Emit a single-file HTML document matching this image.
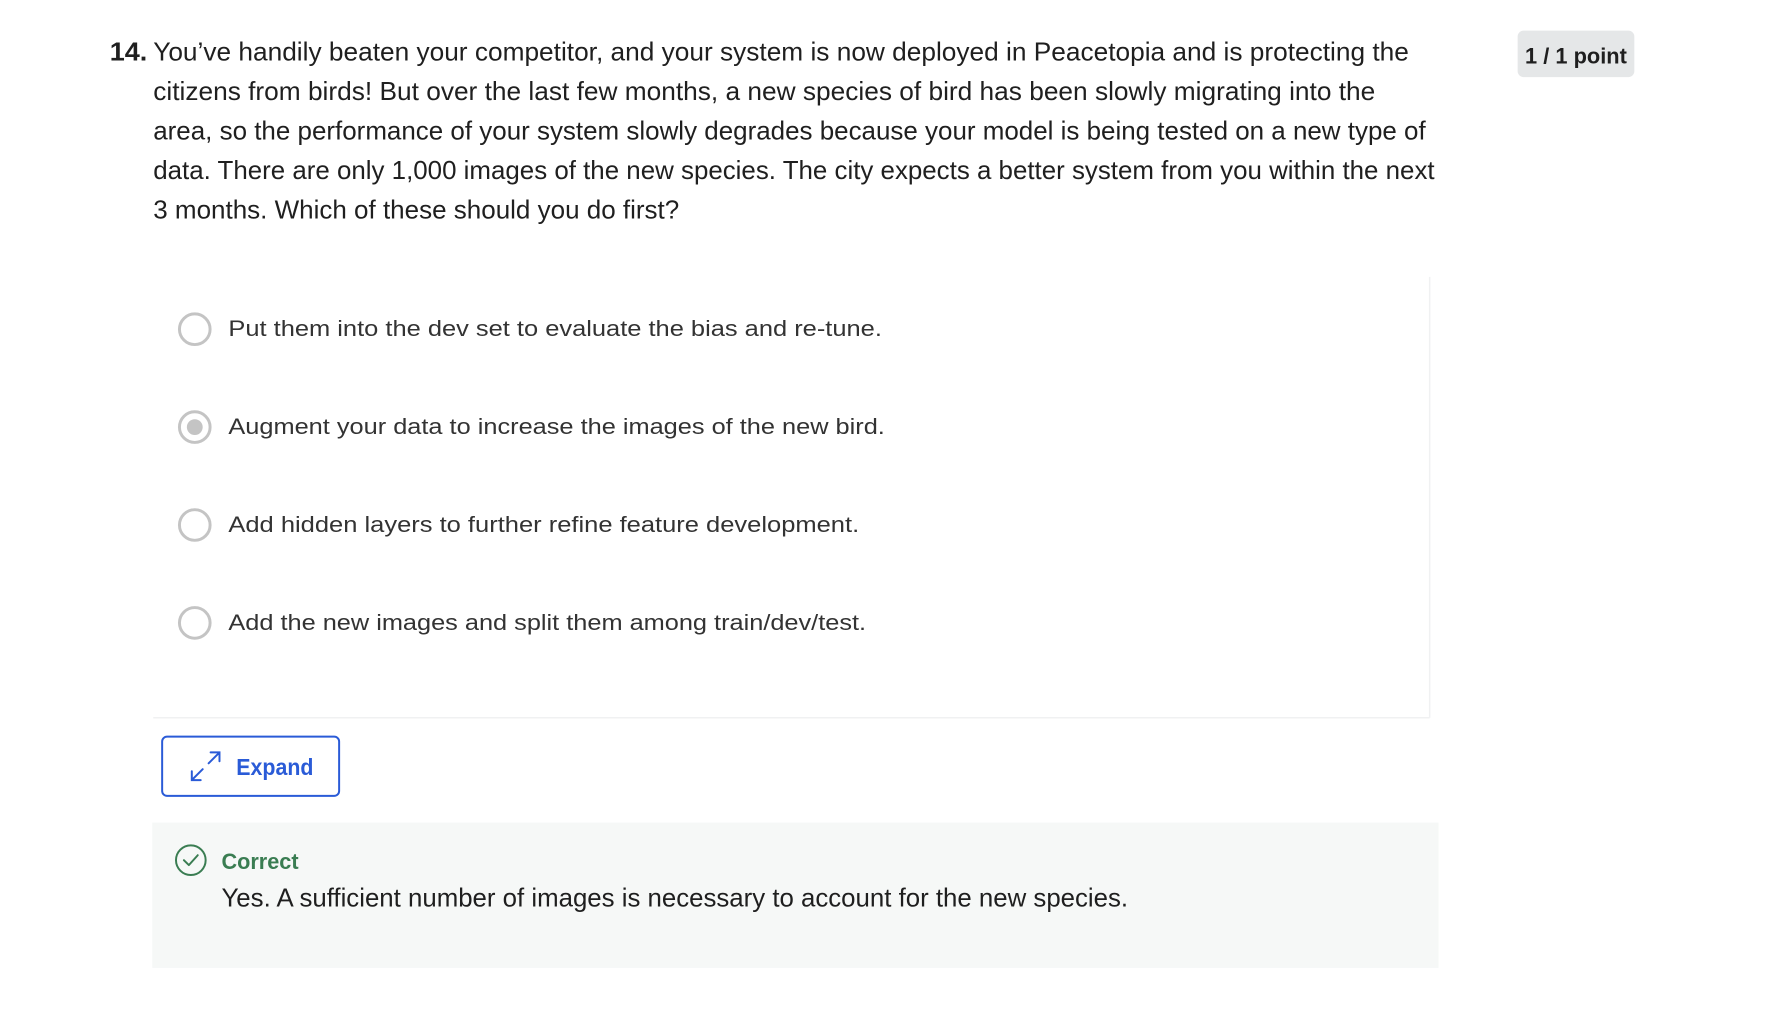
<!DOCTYPE html>
<html><head><meta charset="utf-8"><style>
html,body{margin:0;padding:0;background:#fff;width:1786px;height:1032px;overflow:hidden}
svg{display:block}
</style></head><body>
<svg width="1786" height="1032" viewBox="0 0 1786 1032" xmlns="http://www.w3.org/2000/svg">
<g transform="scale(0.9887)">
<g font-family="Liberation Sans, sans-serif" fill="#1f1f1f" font-size="26">
<text x="111" y="61" font-weight="bold" textLength="38" lengthAdjust="spacingAndGlyphs">14.</text>
<text x="155" y="61" textLength="1270" lengthAdjust="spacingAndGlyphs">You’ve handily beaten your competitor, and your system is now deployed in Peacetopia and is protecting the</text>
<text x="155" y="101" textLength="1236" lengthAdjust="spacingAndGlyphs">citizens from birds! But over the last few months, a new species of bird has been slowly migrating into the</text>
<text x="155" y="141" textLength="1287" lengthAdjust="spacingAndGlyphs">area, so the performance of your system slowly degrades because your model is being tested on a new type of</text>
<text x="155" y="181" textLength="1296" lengthAdjust="spacingAndGlyphs">data. There are only 1,000 images of the new species. The city expects a better system from you within the next</text>
<text x="155" y="221" textLength="532" lengthAdjust="spacingAndGlyphs">3 months. Which of these should you do first?</text>
</g>
<rect x="1535" y="31" width="118" height="47" rx="6" fill="#e5e7e8"/>
<text x="1594" y="64" text-anchor="middle" font-family="Liberation Sans, sans-serif" font-weight="bold" font-size="22" fill="#1f1f1f" textLength="103" lengthAdjust="spacingAndGlyphs">1 / 1 point</text>

<path d="M1446 280 V726 M155 726 H1446" stroke="#f0f1f2" stroke-width="1.5" fill="none"/>

<g fill="none" stroke="#c4c4c4" stroke-width="3">
<circle cx="197" cy="333" r="15.5"/>
<circle cx="197" cy="432" r="15.5"/>
<circle cx="197" cy="531" r="15.5"/>
<circle cx="197" cy="630" r="15.5"/>
</g>
<circle cx="197" cy="432" r="8" fill="#c4c4c4"/>
<g font-family="Liberation Sans, sans-serif" fill="#333" font-size="22">
<text x="231" y="340" textLength="661" lengthAdjust="spacingAndGlyphs">Put them into the dev set to evaluate the bias and re-tune.</text>
<text x="231" y="439" textLength="664" lengthAdjust="spacingAndGlyphs">Augment your data to increase the images of the new bird.</text>
<text x="231" y="538" textLength="638" lengthAdjust="spacingAndGlyphs">Add hidden layers to further refine feature development.</text>
<text x="231" y="637" textLength="645" lengthAdjust="spacingAndGlyphs">Add the new images and split them among train/dev/test.</text>
</g>

<rect x="164" y="745" width="179" height="60" rx="5" fill="#fff" stroke="#2a5bd7" stroke-width="2"/>
<g stroke="#2a5bd7" stroke-width="2" fill="none" stroke-linecap="round">
<path d="M194 789 L205 778 M211 772 L222 761 M213 761 H222 V770 M194 780 V789 H203"/>
</g>
<text x="239" y="784" font-family="Liberation Sans, sans-serif" font-weight="bold" font-size="23" fill="#2a5bd7" textLength="78" lengthAdjust="spacingAndGlyphs">Expand</text>

<rect x="154" y="832" width="1301" height="147" fill="#f6f8f7"/>
<circle cx="193" cy="870" r="15" fill="none" stroke="#3a7d52" stroke-width="2"/>
<path d="M186 870 L191 875 L200 865" fill="none" stroke="#3a7d52" stroke-width="2" stroke-linecap="round" stroke-linejoin="round"/>
<text x="224" y="879" font-family="Liberation Sans, sans-serif" font-weight="bold" font-size="22" fill="#3a7d52" textLength="78" lengthAdjust="spacingAndGlyphs">Correct</text>
<text x="224" y="917" font-family="Liberation Sans, sans-serif" font-size="26" fill="#1f1f1f" textLength="917" lengthAdjust="spacingAndGlyphs">Yes. A sufficient number of images is necessary to account for the new species.</text>
</g>
</svg>
</body></html>
